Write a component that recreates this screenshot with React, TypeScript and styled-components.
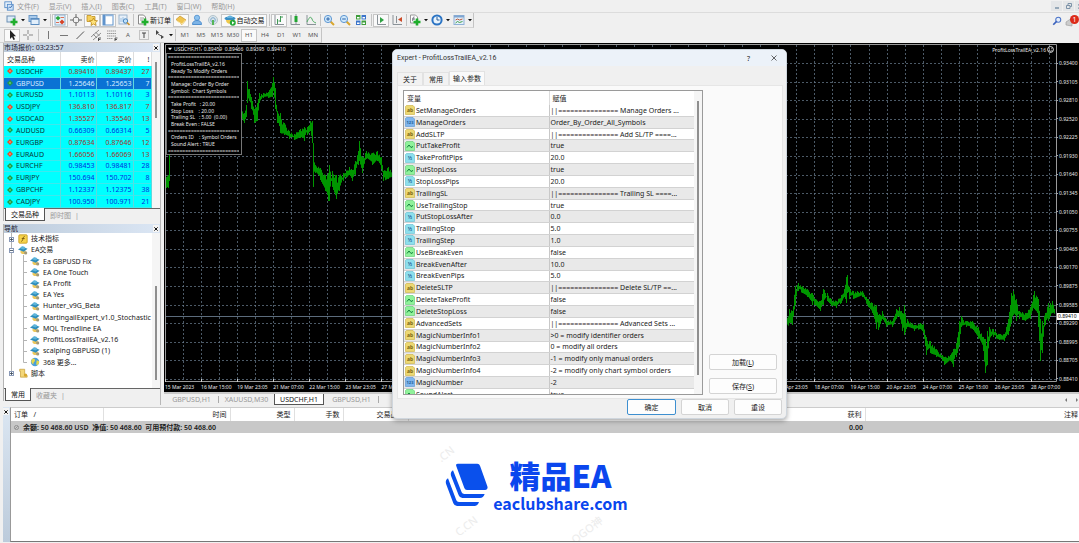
import React from "react";
import styled, { createGlobalStyle, css } from "styled-components";

const Global = createGlobalStyle`
  * { box-sizing: border-box; }
  body { margin: 0; background: #f0f0f0; }
  body, button, table, input {
    font-family: "Noto Sans", "Noto Sans CJK SC", sans-serif;
    font-size: 7px;
    line-height: 9px;
    color: #1a1a1a;
  }
  button { border: 0; padding: 0; background: none; }
  table { border-collapse: collapse; border-spacing: 0; }
  th, td { padding: 0; font-weight: 400; text-align: left; white-space: nowrap; }
  a { color: inherit; text-decoration: none; }
  svg { display: block; flex: none; }
`;

/* ---------- shell ---------- */

const App_ = styled.div`
  position: relative;
  display: flex;
  flex-direction: column;
  min-height: 100vh;
  overflow: hidden;
`;

const MenuBar = styled.nav`
  display: flex;
  align-items: center;
  gap: 3px;
  height: 13px;
  padding-left: 4px;
  border-bottom: 1px solid #dcdcdc;
`;

const MenuList = styled.div`
  display: flex;
  gap: 10px;
`;

const MenuItem = styled.button`
  color: #999;
  white-space: nowrap;
`;

const WindowButtons = styled.div`
  display: flex;
  gap: 1px;
  margin-left: auto;
  overflow: hidden;
  width: 28px;
`;

const WindowButton = styled.button`
  flex: none;
  display: grid;
  place-items: center;
  width: 11px;
  height: 10px;
  background: #e4e6e8;
`;

const ToolRow = styled.div`
  display: flex;
  justify-content: space-between;
  height: 15px;
`;

const ToolGroup = styled.div`
  display: flex;
  align-items: center;
  padding-left: 4px;
  border-right: 1px solid #c4c4c4;
  border-bottom: 1px solid #d4d4d4;
`;

const Tool = styled.button<{ $on?: boolean }>`
  display: flex;
  align-items: center;
  justify-content: center;
  width: 16px;
  height: 13px;
  color: #555;
  font-size: 6px;
  border: 1px solid transparent;
  ${(p) => p.$on && css`background: #fafafa; border-color: #c6c6c6;`}
`;

const WideTool = styled(Tool)<{ $w: number }>`
  width: ${(p) => p.$w}px;
  gap: 1px;
  font-size: 7px;
  color: #111;
  white-space: nowrap;
`;

const CaretBox = styled.button`
  display: grid;
  place-items: center;
  width: 6px;
  height: 13px;
`;

const Sep = styled.span<{ $w: number }>`
  display: flex;
  justify-content: center;
  width: ${(p) => p.$w}px;
  &::before { content: ""; width: 1px; height: 12px; background: #c4c4c4; }
`;

const ToolRight = styled.div`
  display: flex;
  align-items: center;
  margin-right: 0;
`;

const Alerts = styled.button`
  position: relative;
  width: 14px;
  height: 14px;
  overflow: hidden;
`;

const Badge = styled.span`
  position: absolute;
  right: 0;
  top: 1px;
  width: 9px;
  height: 9px;
  border-radius: 5px;
  background: #dc2a18;
  color: #fff;
  font-size: 7px;
  line-height: 9px;
  text-align: center;
`;

const Workspace = styled.main`
  display: flex;
  height: 362px;
`;

/* ---------- left panels ---------- */

const Side = styled.aside`
  display: flex;
  flex-direction: column;
  gap: 3px;
  width: 161px;
  margin-right: 3px;
  padding: 0 0 2px 3px;
  border-right: 1px solid #b8b8b8;
`;

const Panel = styled.section`
  display: flex;
  flex-direction: column;
  border-left: 1px solid #b4b4b4;
  background: #fff;
`;

const PanelTitle = styled.header`
  display: flex;
  align-items: center;
  justify-content: space-between;
  height: 9px;
  color: #223;
  background: linear-gradient(90deg, #bccbdb, #dbe6f4);
  padding-right: 1px;
`;

const CloseButton = styled.button`
  display: grid;
  place-items: center;
  width: 6px;
  height: 7px;
  background: #f4f4f4;
`;

const PanelBody = styled.div`
  display: flex;
  justify-content: space-between;
`;

const ScrollTrack = styled.div<{ $top: number }>`
  width: 8px;
  padding: ${(p) => p.$top}px 0 0 3px;
  background: #f5f5f5;
`;

const Thumb = styled.div<{ $h: number }>`
  width: 2px;
  height: ${(p) => p.$h}px;
  background: #8f8f8f;
`;

const QuoteTable = styled.table`
  width: 147px;
  height: 156px;
  table-layout: fixed;
  th, td { text-align: right; padding-right: 1px; }
  th:first-child, td:first-child { text-align: left; }
  th { height: 14px; border-right: 1px solid #ddd; }
  td { border-right: 1px solid #5fd8dc; border-bottom: 1px solid #3ee8ec; }
`;

const QuoteRow = styled.tr<{ $sel?: boolean; $down?: boolean }>`
  background: ${(p) => (p.$sel ? "#0a72d4" : "#00ffff")};
  color: ${(p) => (p.$sel ? "#d8ecff" : p.$down ? "#a2342c" : "#0030e0")};
  td:first-child { color: ${(p) => (p.$sel ? "#d8ecff" : "#083838")}; }
`;

const SymbolCell = styled.span`
  display: flex;
  align-items: center;
  gap: 3px;
  padding-left: 3px;
`;

const TabStrip = styled.div`
  display: flex;
  height: 13px;
  padding-left: 1px;
  background: #f0f0f0;
  border-top: 1px solid #666;
`;

const PanelTab = styled.button<{ $on?: boolean }>`
  padding: 0 5px;
  height: 12px;
  color: #999;
  ${(p) =>
    p.$on
      ? css`
          color: #111;
          background: #fff;
          border: 1px solid #555;
          border-top: 0;
          margin-top: -1px;
          height: 13px;
        `
      : css`
          &::after { content: "|"; margin-left: 4px; }
        `}
`;

const Tree = styled.ul`
  display: grid;
  grid-template-rows: repeat(13, minmax(0, 1fr));
  flex: 1;
  height: 155px;
  margin: 0;
  padding: 0 0 9px;
  list-style: none;
  overflow: hidden;
`;

const TreeRow = styled.li`
  display: flex;
  align-items: center;
  gap: 3px;
  white-space: nowrap;
`;

/* ---------- chart ---------- */

const ChartColumn = styled.div`
  flex: 1;
  min-width: 0;
  display: flex;
  flex-direction: column;
`;

const ChartWindow = styled.section`
  position: relative;
  display: grid;
  grid-template-columns: minmax(0, 1fr) 22px;
  grid-template-rows: 339px 10px;
  background: #000;
  color: #e8e8e8;
  font-size: 5px;
  line-height: 6px;
  overflow: hidden;
`;

const Plot = styled.svg`
  width: 100%;
  height: 339px;
`;

const PriceAxis = styled.div`
  position: relative;
  display: flex;
  flex-direction: column;
  justify-content: space-between;
  padding-top: 17px;
  margin-left: -1px;
`;

const Price = styled.span`
  display: flex;
  align-items: center;
  gap: 1px;
  height: 6px;
  &::before { content: ""; width: 2px; height: 1px; background: #aaa; }
`;

const CurrentPrice = styled.span`
  position: absolute;
  top: 270px;
  left: 1px;
  right: 0;
  height: 7px;
  padding-left: 1px;
  background: #fff;
  color: #000;
`;

const DateAxis = styled.div`
  grid-column: 1 / -1;
  display: grid;
  grid-template-columns: repeat(25, 1fr);
  margin-right: 12px;
  padding: 2px 0 0 1px;
  white-space: nowrap;
`;

const DateLabel = styled.span<{ $col: number }>`
  grid-column: ${(p) => p.$col};
  grid-row: 1;
  width: 0;
`;

const ChartCaption = styled.div`
  position: absolute;
  left: 4px;
  top: 3px;
  display: flex;
  align-items: center;
  gap: 2px;
  white-space: pre;
`;

const ExpertBadge = styled.div`
  position: absolute;
  right: 25px;
  top: 3px;
  display: flex;
  align-items: center;
  gap: 1px;
`;

const InfoBox = styled.div`
  position: absolute;
  left: 2px;
  top: 10px;
  width: 76px;
  height: 102px;
  display: grid;
  grid-template-rows: repeat(15, 1fr);
  align-items: center;
  padding: 0 2px 0 4px;
  background: #000;
  border: 1px solid #777;
  white-space: pre;
`;

const Rule = styled.span`
  margin-left: -3px;
  overflow: hidden;
  color: #c8c8c8;
  font-weight: 700;
`;

const ChartTabs = styled.div`
  display: flex;
  align-items: stretch;
  height: 13px;
  border-top: 2px solid #c8c8c8;
`;

const ChartTab = styled.button<{ $on?: boolean; $bar?: boolean }>`
  width: ${(p) => (p.$on ? 50 : 55)}px;
  color: ${(p) => (p.$on ? "#222" : "#999")};
  ${(p) => p.$on && css`background: #fff; border: 1px solid #555; border-top: 0;`}
  ${(p) => p.$bar && css`background: linear-gradient(#aaa, #aaa) right center / 1px 7px no-repeat;`}
`;

const TabArrows = styled.div`
  display: flex;
  align-items: center;
  gap: 7px;
  margin-left: auto;
`;

/* ---------- terminal ---------- */

const Terminal = styled.section`
  flex: 1;
  display: flex;
  padding: 2px 0 1px 3px;
`;

const Grip = styled.div`
  width: 7px;
  background: linear-gradient(#dbe6f2, #bccbdb);
  padding-top: 1px;
`;

const TerminalBody = styled.div`
  flex: 1;
  display: flex;
  flex-direction: column;
  background: #fff;
  border-left: 1px solid #999;
  border-top: 1px solid #ccc;
  border-bottom: 1px solid #777;
`;

const Orders = styled.table`
  width: 100%;
  table-layout: fixed;
  th { height: 13px; text-align: right; padding-right: 3px; border-right: 1px solid #e0e0e0; overflow: hidden; }
  th:first-child { text-align: left; padding-left: 3px; }
  th:last-child { padding-right: 1px; border-right: 0; }
  td { height: 12px; background: #c8c8c8; font-weight: 600; }
`;

const AmountCell = styled.td`
  && { text-align: right; padding-right: 2px; }
`;

const Balance = styled.span`
  display: flex;
  align-items: center;
  gap: 4px;
  padding-left: 3px;
  white-space: pre;
`;

const Brand = styled.div`
  position: relative;
  flex: 1;
  display: flex;
  align-items: center;
  justify-content: center;
  gap: 5px;
  padding: 0 17px 3px 0;
  overflow: hidden;
`;

const BrandText = styled.div`
  display: flex;
  flex-direction: column;
  align-items: center;
  color: #0a46ee;
  font-family: "Noto Sans CJK SC", sans-serif;
  font-weight: 700;
`;

const BrandName = styled.strong`
  font-size: 31px;
  line-height: 34px;
`;

const BrandUrl = styled.a`
  && { color: #0a46ee; }
  font-size: 16px;
  line-height: 22px;
`;

const Watermark = styled.span<{ $x: number; $y: number }>`
  position: absolute;
  left: ${(p) => p.$x}px;
  top: ${(p) => p.$y}px;
  font-size: 11px;
  line-height: 14px;
  color: #ececec;
  transform: rotate(-38deg);
`;

/* ---------- dialog ---------- */

const Dialog = styled.div`
  position: absolute;
  left: 392px;
  top: 49px;
  width: 395px;
  height: 370px;
  display: flex;
  flex-direction: column;
  background: #f0f0f0;
  border: 1px solid #cfd6dd;
  border-radius: 5px;
  box-shadow: 0 2px 5px rgba(0, 0, 0, 0.35);
  overflow: hidden;
`;

const DialogTitle = styled.header`
  display: flex;
  align-items: center;
  height: 16px;
  padding: 0 8px 0 4px;
  background: #ecf2f9;
`;

const DialogTitleText = styled.span`
  flex: 1;
  color: #333;
  font-family: Roboto, sans-serif;
`;

const TitleButton = styled.button`
  display: grid;
  place-items: center;
  width: 9px;
  height: 12px;
  margin-left: 16px;
`;

const DialogTabs = styled.div`
  display: flex;
  align-items: flex-end;
  height: 19px;
  padding-left: 4px;
`;

const DialogTab = styled.button<{ $on?: boolean }>`
  width: ${(p) => (p.$on ? 36 : 26)}px;
  height: ${(p) => (p.$on ? 14 : 13)}px;
  background: ${(p) => (p.$on ? "#fafafa" : "#f2f2f2")};
  border: 1px solid #e2e2e2;
  border-bottom: 0;
`;

const DialogPage = styled.div`
  display: flex;
  gap: 6px;
  height: 314px;
  margin: 0 3px 0 4px;
  padding: 4px 5px 4px 5px;
  background: #fafafa;
  border: 1px solid #e6e6e6;
`;

const ParamFrame = styled.div`
  display: flex;
  width: 302px;
  height: 305px;
  background: #fff;
  border: 1px solid #9a9a9a;
  overflow: hidden;
`;

const ParamTable = styled.table`
  flex: 1;
  width: 290px;
  height: 310px;
  table-layout: fixed;
  th { height: 14px; padding-left: 3px; }
  th + th, td + td { border-left: 1px solid #c8c8c8; }
  td + td { padding-left: 1px; overflow: hidden; text-overflow: ellipsis; }
  th + th { border-color: #ddd; }
`;

const ParamRow = styled.tr<{ $alt: boolean }>`
  background: ${(p) => (p.$alt ? "#e9e9e9" : "#fff")};
  td { border-bottom: 1px solid #d2d2d2; }
`;

const ParamName = styled.span`
  display: flex;
  align-items: center;
  gap: 1px;
  padding-left: 1px;
`;

const SideButtons = styled.div`
  display: flex;
  flex: 1;
  flex-direction: column;
  justify-content: flex-end;
  gap: 8px;
`;

const PushButton = styled.button<{ $main?: boolean; $w: number }>`
  width: ${(p) => p.$w}px;
  height: 16px;
  background: #fdfdfd;
  border: 1px solid ${(p) => (p.$main ? "#3d8fd0" : "#d4d4d4")};
  border-radius: 2px;
`;

const DialogActions = styled.footer`
  display: flex;
  justify-content: flex-end;
  gap: 5px;
  padding-right: 4px;
`;

/* ---------- icons ---------- */

const Ico = ({ s = 12, children }: { s?: number; children: React.ReactNode }) => (
  <svg width={s} height={s} viewBox="0 0 12 12" fill="none" aria-hidden="true">
    {children}
  </svg>
);

const Cross = ({ s = 5, c = "#111", w = 3 }: { s?: number; c?: string; w?: number }) => (
  <Ico s={s}>
    <path d="M1 1L11 11M11 1L1 11" stroke={c} strokeWidth={w} />
  </Ico>
);

const Caret = () => (
  <CaretBox aria-label="更多选项">
    <Ico s={4}>
      <path d="M0 3h12l-6 7z" fill="#111" />
    </Ico>
  </CaretBox>
);

const plus = <path d="M8 4.500v7M4.500 8h7" stroke="#1fae2c" strokeWidth="2.6" />;

const icons: Record<string, React.ReactNode> = {
  logo: (
    <>
      <rect x="1" y="1" width="8" height="7" fill="#e8f2fc" stroke="#4e86c6" />
      <rect x="4" y="4" width="7" height="7" fill="#cfe3f8" stroke="#4e86c6" />
      <path d="M5 9l2-2 1 1 2-3" stroke="#2a62a8" />
    </>
  ),
  newChart: (
    <>
      <rect x="1" y="2" width="8" height="6" fill="#dcebf8" stroke="#6d8fb3" />
      {plus}
    </>
  ),
  profiles: (
    <>
      <rect x="1" y="1.5" width="8" height="6" fill="#a9cbec" stroke="#6a97c5" />
      <rect x="3" y="4.5" width="8" height="6" fill="#e2effb" stroke="#5a8cc0" />
      <path d="M3 5h8" stroke="#5a8cc0" strokeWidth="1.5" />
    </>
  ),
  marketWatch: (
    <>
      <rect x="1" y="1" width="10" height="10" fill="#e6f1fa" stroke="#8fb0cc" />
      <path d="M4 2l2.500 2L4 6.500 1.500 4z" fill="#2aa83a" />
      <path d="M8 5.500l2.500 2.500L8 10.500 5.500 8z" fill="#d64326" />
      <path d="M6.500 3.500h3.500M2 8.500h3" stroke="#de6f55" />
    </>
  ),
  crosshair: (
    <>
      <circle cx="6" cy="6" r="3" stroke="#888" />
      <path d="M6 0v4M6 8v4M0 6h4M8 6h4" stroke="#666" />
    </>
  ),
  favorites: (
    <>
      <path d="M1 1.500h4l1 1h3v5H1z" fill="#f4cf5b" stroke="#c09020" strokeWidth=".8" />
      <path d="M7.500 4l1.200 2.500 2.800.3-2 1.900.6 2.800-2.600-1.500-2.500 1.500.5-2.800-2-1.900 2.800-.3z" fill="#ffe27a" stroke="#b98714" strokeWidth=".8" />
    </>
  ),
  navigator: (
    <>
      <rect x="1" y="1" width="10" height="10" fill="#fff" stroke="#5f93cc" />
      <path d="M1 1h2.500v10H1z" fill="#5f93cc" />
      <path d="M3 1.500h8" stroke="#8fb5de" strokeWidth="1.500" />
    </>
  ),
  tester: (
    <>
      <rect x="1" y="1" width="8" height="9" fill="#e7f0f9" stroke="#9ab4cd" />
      <path d="M3 8V4M5 8V3M7 8V5" stroke="#9cc0e2" />
      <circle cx="7.500" cy="7" r="2.200" fill="#bfe0fa" stroke="#4b86bf" />
      <path d="M9 8.500l2.500 2.500" stroke="#c8922c" strokeWidth="1.600" />
    </>
  ),
  newOrder: (
    <>
      <path d="M1.500 1h5l2 2v7h-7z" fill="#fff" stroke="#888" />
      <path d="M3 4h4M3 6h3" stroke="#888" strokeWidth=".8" />
      {plus}
    </>
  ),
  metaEditor: (
    <>
      <path d="M1 5.500l4-3.500 6 4-4 4.500z" fill="#efc34e" stroke="#cf9c34" strokeWidth=".8" />
      <path d="M2 7l5 3 3.500-4" stroke="#fbe7a6" />
    </>
  ),
  account: (
    <>
      <circle cx="6" cy="3.800" r="2.600" fill="#8cc2ef" stroke="#5f9ad4" />
      <path d="M1.500 10.500c0-3 2-4 4.500-4s4.500 1 4.500 4z" fill="#7db3e6" stroke="#4f8fcf" />
    </>
  ),
  signal: (
    <>
      <circle cx="6" cy="6" r="4.500" fill="#dbe6ec" stroke="#b4c4cd" />
      <circle cx="6" cy="6" r="2.300" stroke="#7fa9cc" />
      <path d="M6 6v5" stroke="#57b657" strokeWidth="2" />
    </>
  ),
  autoTrade: (
    <>
      <ellipse cx="6" cy="4.500" rx="5.500" ry="2" fill="#3a8ec4" />
      <path d="M3 4c0-3.500 6-3.500 6 0z" fill="#66b3dd" />
      <path d="M2 6h7c0 5-7 5-7 0z" fill="#efc94c" />
      <circle cx="8.800" cy="8.800" r="3" fill="#25a838" />
      <path d="M8 7.200l2.500 1.600L8 10.400z" fill="#fff" />
    </>
  ),
  bars: (
    <>
      <path d="M2 1v9.500h9" stroke="#8a9298" />
      <path d="M4.500 5v5M7.500 2v6M7.500 3h2.500M5.500 7h2" stroke="#3f9a55" />
    </>
  ),
  candles: (
    <>
      <path d="M2 1v9.500h9M7 0v10" stroke="#8a9298" />
      <rect x="5.500" y="2" width="3" height="6" fill="#21a532" />
    </>
  ),
  line: (
    <>
      <path d="M2 1v9.500h9" stroke="#8a9298" />
      <path d="M2 8c2-5 4-6 5-3s2 3 4 4" stroke="#52ad66" />
    </>
  ),
  zoomIn: (
    <>
      <path d="M7.500 7.500l3.500 3.500" stroke="#d9a62e" strokeWidth="2" />
      <circle cx="5" cy="5" r="3.600" fill="#cfe8fb" stroke="#5f97d2" />
      <path d="M5 3.200v3.600M3.200 5h3.600" stroke="#2a62a8" />
    </>
  ),
  zoomOut: (
    <>
      <path d="M7.500 7.500l3.500 3.500" stroke="#d9a62e" strokeWidth="2" />
      <circle cx="5" cy="5" r="3.600" fill="#cfe8fb" stroke="#5f97d2" />
      <path d="M3.200 5h3.600" stroke="#2a62a8" />
    </>
  ),
  tile: (
    <>
      <rect x="1" y="1" width="10" height="10" fill="#fff" />
      <path d="M1 1h4.500v4.500H1zM6.500 6.500H11V11H6.500z" fill="#3f9d3c" />
      <path d="M6.500 1H11v4.500H6.500zM1 6.500h4.500V11H1z" fill="#3b74c9" />
      <path d="M2 3h2.500v1.500H2zM7.500 3H10v1.500H7.500zM2 8.500h2.500V10H2zM7.500 8.500H10V10H7.500z" fill="#fff" />
    </>
  ),
  scroll: (
    <>
      <path d="M2.500 1v9.500h8.500" stroke="#8a9298" />
      <path d="M5 3l4 3-4 3z" fill="#2fa243" />
    </>
  ),
  shift: (
    <>
      <path d="M2 1v9.500h9M5.500 2v7" stroke="#8a9298" />
      <path d="M11 3L7 5.500 11 8z" fill="#cc4b28" />
    </>
  ),
  indicator: (
    <>
      <path d="M1.500 1h5l2 2v6h-7z" fill="#fff" stroke="#999" />
      <path d="M5.500 3c-2-1-1 4-2.500 4M3 5h3" stroke="#667" />
      {plus}
    </>
  ),
  clock: (
    <>
      <circle cx="6" cy="6" r="4.600" fill="#e9f4fd" stroke="#2b74c4" strokeWidth="2" />
      <path d="M6 3v3h2.500" stroke="#2b5c94" />
    </>
  ),
  template: (
    <>
      <rect x="1" y="1.500" width="10" height="9" fill="#e4effa" stroke="#8db0d6" />
      <path d="M1 2.500h10" stroke="#7fa5d0" strokeWidth="2" />
      <path d="M2.500 6l2-1 2 1 3-1" stroke="#b85a3c" />
      <path d="M2.500 9l2-1.500 2 1 3-1" stroke="#42a04c" />
    </>
  ),
  cursor: <path d="M4 1v9l2-2 1.500 3 1.500-.8L7.500 7.300H10z" fill="#222" />,
  plusThin: <path d="M6 1v4M6 7v4M1 6h4M7 6h4" stroke="#888" />,
  vline: <path d="M6.500 2v8" stroke="#777" />,
  hline: <path d="M2 6.500h8" stroke="#777" />,
  trend: <path d="M2.500 10L10 2.500" stroke="#555" />,
  channel: (
    <>
      <path d="M1 8l8-7M3 11l8-7M3 5l4 4M5.500 3l4 4" stroke="#777" strokeWidth=".8" />
      <path d="M8.500 12V9H11M8.500 10.500h2" stroke="#333" strokeWidth=".8" />
    </>
  ),
  fibo: (
    <>
      <path d="M1 2h9M1 4.500h9M1 7h9M1 9.500h6" stroke="#999" strokeDasharray="1.500 .5" />
      <path d="M9 12V9h2.500M9 10.500h2" stroke="#333" strokeWidth=".8" />
    </>
  ),
  label: (
    <>
      <rect x="1.500" y="1.500" width="9" height="9" stroke="#999" strokeDasharray="1 1" />
      <path d="M4 4h4M6 4v5" stroke="#444" />
    </>
  ),
  arrows: (
    <>
      <path d="M2 1l3 2.500-3 2.500zM7 6l3 2-3 2z" fill="#444" />
      <path d="M4 5l4 2.500" stroke="#555" />
    </>
  ),
  search: (
    <>
      <circle cx="7.500" cy="4.500" r="3" fill="#e4eefb" stroke="#4a73c8" strokeWidth="1.300" />
      <path d="M5.500 6.500l-4 4" stroke="#3b62bd" strokeWidth="2" />
    </>
  ),
  expert: (
    <>
      <path d="M3 7h6v2.500c-1.500 2-4.500 2-6-.5z" fill="#ecc75a" />
      <path d="M0 5.500L5 2l6.500 2.500L7 8z" fill="#2f8dbb" />
      <path d="M2.500 4C4 .5 8 1 9 4L6.500 5.500z" fill="#5db4da" />
      <circle cx="9.200" cy="9.500" r="1.900" fill="#a39a78" />
    </>
  ),
  indicators: (
    <>
      <rect x="1" y="1" width="10" height="10" rx="1" fill="#f6d34c" stroke="#c79a1c" />
      <path d="M8 3C5.500 2.500 6.500 8 4 9M4.500 5.500H8" stroke="#6d4e08" />
    </>
  ),
  globe: (
    <>
      <circle cx="6" cy="6" r="5" fill="#4aa0d8" />
      <path d="M2 3c2-2 4-1 4 1s-2 2-2 4-2-1-2.500-2zM8 4l3 1c0 3-1 4-3 5-1-2 0-3 0-6z" fill="#e6d84a" />
    </>
  ),
  script: (
    <>
      <path d="M2 1.500h6v7.500h3v2H3V4H2z" fill="#f3d77a" stroke="#c39a30" strokeWidth=".8" />
      <circle cx="9" cy="8.500" r="2" fill="#d8a72c" />
    </>
  ),
};

const Icon = ({ n, s }: { n: string; s?: number }) => <Ico s={s}>{icons[n]}</Ico>;

const tint: Record<string, [string, string, string]> = {
  ab: ["#ecd873", "#c9ae3c", "ab"],
  en: ["#7fb6ee", "#5590cf", "123"],
  bo: ["#8ff29a", "#5cc96e", ""],
  du: ["#8ddfec", "#5fbccf", "½"],
};

const ParamIcon = ({ k }: { k: string }) => {
  const [bg, edge, t] = tint[k];
  return (
    <svg width="10" height="10" viewBox="0 0 10 10" aria-hidden="true">
      <path d="M1.500 .5H8l1.500 1.500v7.500H.5v-8z" fill={bg} stroke={edge} strokeWidth=".6" />
      {t ? (
        <text x="5" y="7" fontSize={t.length > 2 ? 4 : 5} fontWeight="700" textAnchor="middle" fill={k === "ab" ? "#7a6410" : "#1e5b94"}>
          {t}
        </text>
      ) : (
        <path d="M2 6.500l2-2.500 2 2.500 2-1" fill="none" stroke="#11803a" />
      )}
    </svg>
  );
};

/* ---------- data ---------- */

const menus = ["文件(F)", "显示(V)", "插入(I)", "图表(C)", "工具(T)", "窗口(W)", "帮助(H)"];

const quotes: [string, string, string, string, boolean][] = [
  ["USDCHF", "0.89410", "0.89437", "27", true],
  ["GBPUSD", "1.25646", "1.25653", "7", false],
  ["EURUSD", "1.10113", "1.10116", "3", false],
  ["USDJPY", "136.810", "136.817", "7", true],
  ["USDCAD", "1.35527", "1.35540", "13", true],
  ["AUDUSD", "0.66309", "0.66314", "5", false],
  ["EURGBP", "0.87634", "0.87646", "12", true],
  ["EURAUD", "1.66056", "1.66069", "13", true],
  ["EURCHF", "0.98453", "0.98481", "28", false],
  ["EURJPY", "150.694", "150.702", "8", false],
  ["GBPCHF", "1.12337", "1.12375", "38", false],
  ["CADJPY", "100.950", "100.971", "21", false],
];

const experts = [
  "Ea GBPUSD Fix",
  "EA One Touch",
  "EA Profit",
  "EA Yes",
  "Hunter_v9G_Beta",
  "MartingailExpert_v1.0_Stochastic",
  "MQL Trendline EA",
  "ProfitLossTrailEA_v2.16",
  "scalping GBPUSD (1)",
];

const params: [string, string, string][] = [
  ["ab", "SetManageOrders", "||=============== Manage Orders ..."],
  ["en", "ManageOrders", "Order_By_Order_All_Symbols"],
  ["ab", "AddSLTP", "||=============== Add SL/TP ====..."],
  ["bo", "PutTakeProfit", "true"],
  ["du", "TakeProfitPips", "20.0"],
  ["bo", "PutStopLoss", "true"],
  ["du", "StopLossPips", "20.0"],
  ["ab", "TrailingSL", "||=============== Trailing SL ====..."],
  ["bo", "UseTrailingStop", "true"],
  ["du", "PutStopLossAfter", "0.0"],
  ["du", "TrailingStop", "5.0"],
  ["du", "TrailingStep", "1.0"],
  ["bo", "UseBreakEven", "false"],
  ["du", "BreakEvenAfter", "10.0"],
  ["du", "BreakEvenPips", "5.0"],
  ["ab", "DeleteSLTP", "||=============== Delete SL/TP ==..."],
  ["bo", "DeleteTakeProfit", "false"],
  ["bo", "DeleteStopLoss", "false"],
  ["ab", "AdvancedSets", "||=============== Advanced Sets ..."],
  ["ab", "MagicNumberInfo1", ">0 = modify identifier orders"],
  ["ab", "MagicNumberInfo2", "0 = modify all orders"],
  ["ab", "MagicNumberInfo3", "-1 = modify only manual orders"],
  ["ab", "MagicNumberInfo4", "-2 = modify only chart symbol orders"],
  ["en", "MagicNumber", "-2"],
  ["bo", "SoundAlert", "true"],
];

const prices = [
  "0.93400", "0.93105", "0.92810", "0.92520", "0.92225", "0.91930", "0.91640", "0.91345", "0.91050",
  "0.90755", "0.90465", "0.90170", "0.89875", "0.89585", "0.89290", "0.88995", "0.88705", "0.88410",
];

const dates: [number, string][] = [
  [1, "15 Mar 2023"], [2, "16 Mar 15:00"], [3, "19 Mar 23:05"], [4, "21 Mar 07:00"],
  [5, "22 Mar 15:00"], [6, "23 Mar 23:05"], [7, "27 Mar 07:00"],
  [18, "17 Apr 23:05"], [19, "18 Apr 07:00"], [20, "19 Apr 15:00"], [21, "20 Apr 23:05"],
  [22, "24 Apr 07:00"], [23, "25 Apr 15:00"], [24, "26 Apr 23:05"], [25, "28 Apr 07:00"],
];

const info = [
  "=", "ProfitLossTrailEA_v2.16", "Ready To Modify Orders", "=", "Manage: Order By Order",
  "Symbol:  Chart Symbols", "=", "Take Profit   : 20.00", "Stop Loss    : 20.00",
  "Trailing SL   : 5.00  (0.00)", "Break Even : FALSE", "=", "Orders ID    : Symbol Orders",
  "Sound Alert : TRUE", "=",
];

/* Price range of the bars: plot x, high, low. */
const segments: [number, number, number][][] = [
  [[2, 134, 145], [4, 132, 145], [5, 112, 138], [6, 100, 120]],
  [
    [77, 66, 74], [80, 70, 80], [82, 62, 74], [83, 38, 60], [85, 46, 58], [87, 54, 66], [90, 66, 80],
    [93, 60, 78], [95, 50, 60], [99, 50, 55], [104, 49, 55], [108, 40, 54], [109, 34, 48], [111, 45, 66],
    [113, 68, 80], [116, 70, 90], [120, 80, 92], [125, 88, 96], [130, 91, 97], [136, 86, 95], [140, 84, 98],
    [143, 84, 92], [146, 78, 88], [148, 78, 100], [149, 100, 144], [151, 122, 130], [156, 125, 137],
    [161, 132, 148], [164, 130, 158], [165, 122, 158], [168, 128, 144], [172, 132, 156], [175, 132, 148],
    [179, 130, 138], [185, 124, 132], [188, 127, 138], [191, 118, 132], [194, 108, 122], [195, 98, 118],
    [198, 114, 130], [202, 108, 116], [208, 110, 122], [213, 108, 118], [217, 114, 126], [219, 128, 138],
    [224, 124, 136], [228, 128, 136],
  ],
  [
    [622, 276, 288], [625, 266, 280], [628, 268, 282], [631, 243, 262], [634, 240, 248], [638, 243, 250],
    [643, 246, 254], [648, 250, 262], [651, 256, 262], [656, 258, 268], [659, 246, 262], [663, 250, 258],
    [667, 256, 263], [672, 258, 265], [677, 252, 260], [680, 246, 254], [682, 234, 260], [683, 232, 250],
    [685, 244, 256], [689, 248, 256], [698, 248, 254], [704, 256, 264], [708, 260, 270], [712, 262, 286],
    [714, 272, 287], [718, 268, 276], [722, 276, 284], [728, 278, 284], [732, 266, 276], [735, 264, 274],
    [738, 270, 288], [740, 262, 292], [743, 276, 284], [750, 282, 288], [756, 280, 286], [759, 281, 290],
    [762, 294, 312], [766, 298, 310], [772, 306, 314], [778, 312, 318], [780, 314, 322], [786, 312, 318],
    [789, 306, 324], [792, 300, 314], [795, 278, 302], [797, 273, 284], [802, 278, 284], [808, 278, 286],
    [814, 284, 296], [819, 294, 308], [821, 296, 330], [823, 288, 322], [825, 284, 298], [829, 286, 294],
    [835, 291, 297], [840, 291, 298], [844, 276, 292], [847, 250, 280], [849, 248, 272], [852, 256, 278],
    [855, 268, 276], [861, 270, 278], [866, 264, 276], [870, 248, 266], [873, 254, 270], [874, 256, 284],
    [876, 276, 318], [878, 278, 310], [881, 270, 282], [884, 260, 278], [888, 258, 270], [891, 266, 274],
  ],
];

const buildBars = () => {
  let d = "";
  segments.forEach((seg) => {
    for (let i = 0; i < seg.length - 1; i++) {
      const [x0, h0, l0] = seg[i];
      const [x1, h1, l1] = seg[i + 1];
      for (let x = x0; x < x1; x++) {
        const t = (x - x0) / (x1 - x0);
        const w = x === x0 ? 0 : (l0 - h0) * 0.35;
        const a = ((x * 37) % 11) / 11;
        const b = ((x * 53) % 13) / 13;
        const hi = h0 + (h1 - h0) * t + a * w;
        const lo = l0 + (l1 - l0) * t - b * w;
        d += `M${x + 0.5} ${hi.toFixed(1)}V${lo.toFixed(1)}`;
      }
    }
  });
  return d;
};

const barPath = buildBars();
const gridX = Array.from({ length: 49 }, (_, i) => Math.round(19 + i * 18.04) + 0.5);
const gridY = Array.from({ length: 18 }, (_, i) => Math.round(20 + i * 18.59) + 0.5);
const tickX = Array.from({ length: 25 }, (_, i) => Math.round(1 + i * 36.08) + 0.5);

/* ---------- parts ---------- */

const TreeGuide = ({ kind }: { kind: "closed" | "open" | "child" | "last" | "end" }) => {
  const child = kind === "child" || kind === "last";
  return (
    <svg width={child ? 23 : 11} height="12" viewBox={`0 0 ${child ? 23 : 11} 12`} fill="none" stroke="#b4b4b4" aria-hidden="true">
      <path d={kind === "end" ? "M7.500 0V6" : "M7.500 0V12"} />
      {child ? (
        <path d={kind === "last" ? "M19.500 0V6.500H23" : "M19.500 0V12M19.500 6.500H23"} />
      ) : (
        <>
          <rect x="5.500" y="4.500" width="4" height="4" fill="#fff" stroke="#8a9ab8" />
          <path d={kind === "open" ? "M6 6.500h3" : "M6 6.500h3M7.500 5v3"} stroke="#345" strokeWidth=".8" />
        </>
      )}
    </svg>
  );
};

const T = ({ n, label, on }: { n: string; label: string; on?: boolean }) => (
  <Tool aria-label={label} $on={on}>
    <Icon n={n} />
  </Tool>
);

const Toolbars = () => (
  <>
    <ToolRow>
      <ToolGroup>
        <T n="newChart" label="新图表" />
        <Caret />
        <T n="profiles" label="配置文件" />
        <Caret />
        <Sep $w={4} />
        <T n="marketWatch" label="市场报价" on />
        <T n="crosshair" label="数据窗口" />
        <T n="favorites" label="导航" on />
        <T n="navigator" label="终端" on />
        <T n="tester" label="策略测试" />
        <Sep $w={3} />
        <WideTool $w={38}>
          <Icon n="newOrder" />
          新订单
        </WideTool>
        <T n="metaEditor" label="编辑器" on />
        <T n="account" label="账户" />
        <T n="signal" label="信号" />
        <WideTool $w={46} $on>
          <Icon n="autoTrade" />
          自动交易
        </WideTool>
        <Sep $w={4} />
        <T n="bars" label="柱状图" on />
        <T n="candles" label="蜡烛图" />
        <T n="line" label="折线图" />
        <Sep $w={2} />
        <T n="zoomIn" label="放大" />
        <T n="zoomOut" label="缩小" />
        <T n="tile" label="平铺" />
        <Sep $w={4} />
        <T n="scroll" label="自动滚动" on />
        <T n="shift" label="图表平移" />
        <Sep $w={2} />
        <T n="indicator" label="指标" />
        <Caret />
        <T n="clock" label="周期" />
        <Caret />
        <T n="template" label="模板" />
        <Caret />
      </ToolGroup>
      <ToolRight>
        <Tool aria-label="搜索">
          <Icon n="search" s={10} />
        </Tool>
        <Alerts aria-label="通知">
          <svg width="14" height="14" viewBox="0 0 14 14" aria-hidden="true">
            <path d="M1 8l6-4v8l-6-1z" fill="#ccc" stroke="#999" strokeWidth=".6" />
          </svg>
          <Badge>1</Badge>
        </Alerts>
      </ToolRight>
    </ToolRow>
    <ToolRow>
      <ToolGroup>
        <T n="cursor" label="光标" on />
        <T n="plusThin" label="十字线" />
        <Sep $w={4} />
        <T n="vline" label="垂直线" />
        <T n="hline" label="水平线" />
        <T n="trend" label="趋势线" />
        <T n="channel" label="通道" />
        <T n="fibo" label="斐波那契" />
        <Tool>A</Tool>
        <T n="label" label="文本标签" />
        <T n="arrows" label="箭头" />
        <Caret />
        <Sep $w={3} />
        {["M1", "M5", "M15", "M30", "H1", "H4", "D1", "W1", "MN"].map((p) => (
          <Tool key={p} $on={p === "H1"}>
            {p}
          </Tool>
        ))}
      </ToolGroup>
    </ToolRow>
  </>
);

const MarketWatch = () => (
  <Panel>
    <PanelTitle>
      市场报价: 03:23:57
      <CloseButton aria-label="关闭">
        <Cross s={4} />
      </CloseButton>
    </PanelTitle>
    <PanelBody>
      <QuoteTable>
        <colgroup>
          <col width="56" />
          <col width="36" />
          <col width="37" />
          <col width="18" />
        </colgroup>
        <thead>
          <tr>
            <th>
              <SymbolCell>交易品种</SymbolCell>
            </th>
            <th>卖价</th>
            <th>买价</th>
            <th>!</th>
          </tr>
        </thead>
        <tbody>
          {quotes.map(([s, b, a, d, down], i) => (
            <QuoteRow key={s} $sel={i === 1} $down={down}>
              <td>
                <SymbolCell>
                  <Ico s={6}>
                    <path d="M6 0l6 6-6 6-6-6z" fill={down ? "#e2502c" : "#1f9a44"} />
                    <path d="M6 4l2 2-2 2-2-2z" fill={down ? "#ffb090" : "#8ae09a"} />
                  </Ico>
                  {s}
                </SymbolCell>
              </td>
              <td>{b}</td>
              <td>{a}</td>
              <td>{d}</td>
            </QuoteRow>
          ))}
        </tbody>
      </QuoteTable>
      <ScrollTrack $top={10}>
        <Thumb $h={56} />
      </ScrollTrack>
    </PanelBody>
    <TabStrip>
      <PanelTab $on>交易品种</PanelTab>
      <PanelTab>即时图</PanelTab>
    </TabStrip>
  </Panel>
);

const Navigator = () => (
  <Panel>
    <PanelTitle>
      导航
      <CloseButton aria-label="关闭">
        <Cross s={4} />
      </CloseButton>
    </PanelTitle>
    <PanelBody>
      <Tree>
        <TreeRow>
          <TreeGuide kind="closed" />
          <Icon n="indicators" s={10} />
          技术指标
        </TreeRow>
        <TreeRow>
          <TreeGuide kind="open" />
          <Icon n="expert" s={10} />
          EA交易
        </TreeRow>
        {experts.map((e) => (
          <TreeRow key={e}>
            <TreeGuide kind="child" />
            <Icon n="expert" s={10} />
            {e}
          </TreeRow>
        ))}
        <TreeRow>
          <TreeGuide kind="last" />
          <Icon n="globe" s={10} />
          368 更多...
        </TreeRow>
        <TreeRow>
          <TreeGuide kind="end" />
          <Icon n="script" s={10} />
          脚本
        </TreeRow>
      </Tree>
      <ScrollTrack $top={53}>
        <Thumb $h={94} />
      </ScrollTrack>
    </PanelBody>
    <TabStrip>
      <PanelTab $on>常用</PanelTab>
      <PanelTab>收藏夹</PanelTab>
    </TabStrip>
  </Panel>
);

const Chart = () => (
  <ChartColumn>
    <ChartWindow>
      <Plot viewBox="0 0 893 339" preserveAspectRatio="none" fill="none" aria-label="USDCHF H1">
        <path
          d={gridX.map((x) => `M${x} 2V338`).join("") + gridY.map((y) => `M2 ${y}H892`).join("")}
          stroke="#66788a"
          strokeDasharray="2 2"
          strokeWidth="1"
          opacity=".75"
        />
        <path d="M2 273.500H892" stroke="#5c6c7c" />
        <path d={barPath} stroke="#009600" />
        <path d="M1.500 338.500V1.500H892.500V338.500H1.500" stroke="#9a9a9a" />
        <path d={tickX.map((x) => `M${x} 336V339`).join("")} stroke="#ccc" />
      </Plot>
      <PriceAxis>
        {prices.map((p) => (
          <Price key={p}>{p}</Price>
        ))}
        <CurrentPrice>0.89410</CurrentPrice>
      </PriceAxis>
      <DateAxis>
        {dates.map(([c, d]) => (
          <DateLabel key={d} $col={c}>
            {d}
          </DateLabel>
        ))}
      </DateAxis>
      <ChartCaption>
        <Ico s={4}>
          <path d="M0 2h12l-6 8z" fill="#fff" />
        </Ico>
        {"USDCHF,H1  0.89459  0.89466  0.89395  0.89410"}
      </ChartCaption>
      <ExpertBadge>
        ProfitLossTrailEA_v2.16
        <Ico s={7}>
          <circle cx="6" cy="6" r="5" stroke="#fff" strokeWidth="1.500" />
          <path d="M4 4v1.500M8 4v1.500M3.500 7.500c1 2 4 2 5 0" stroke="#fff" strokeWidth="1.400" />
        </Ico>
      </ExpertBadge>
      <InfoBox>
        {info.map((l, i) => (l === "=" ? <Rule key={i}>{"=".repeat(25)}</Rule> : <span key={i}>{l}</span>))}
      </InfoBox>
    </ChartWindow>
    <ChartTabs>
      <ChartTab $bar>GBPUSD,H1</ChartTab>
      <ChartTab>XAUUSD,M30</ChartTab>
      <ChartTab $on>USDCHF,H1</ChartTab>
      <ChartTab $bar>GBPUSD,H1</ChartTab>
      <TabArrows>
        <Ico s={4}>
          <path d="M9 0v12L3 6z" fill="#777" />
        </Ico>
        <Ico s={4}>
          <path d="M3 0v12l6-6z" fill="#777" />
        </Ico>
      </TabArrows>
    </ChartTabs>
  </ChartColumn>
);

const TerminalPanel = () => (
  <Terminal>
    <Grip>
      <CloseButton aria-label="关闭">
        <Cross s={4} />
      </CloseButton>
    </Grip>
    <TerminalBody>
      <Orders>
        <colgroup>
          <col width="92" />
          <col width="127" />
          <col width="64" />
          <col width="49" />
          <col width="65" />
          <col />
          <col width="214" />
        </colgroup>
        <thead>
          <tr>
            <th>订单&nbsp;&nbsp; /</th>
            <th>时间</th>
            <th>类型</th>
            <th>手数</th>
            <th>交易品种</th>
            <th>获利</th>
            <th>注释</th>
          </tr>
        </thead>
        <tbody>
          <tr>
            <td colSpan={5}>
              <Balance>
                <Ico s={5}>
                  <circle cx="6" cy="6" r="5" stroke="#888" strokeWidth="2" />
                  <path d="M3 9l6-6" stroke="#888" strokeWidth="2" />
                </Ico>
                {"余额: 50 468.60 USD  净值: 50 468.60  可用预付款: 50 468.60"}
              </Balance>
            </td>
            <AmountCell>0.00</AmountCell>
            <td />
          </tr>
        </tbody>
      </Orders>
      <Brand>
        <Watermark $x={426} $y={14} aria-hidden="true">.CN</Watermark>
        <Watermark $x={443} $y={86} aria-hidden="true">C.CN</Watermark>
        <Watermark $x={558} $y={90} aria-hidden="true">OGO神</Watermark>
        <svg width="43" height="45" viewBox="0 0 129 135" fill="#0a50ec" aria-hidden="true">
          <path d="M34 10q-3-8 5-8h58q6 0 8 6l22 62q3 10-6 11H66q-6 0-8-6z" />
          <path d="M24 22l26 66q2 5 8 5h61q-4 12-14 12H52q-8 0-11-8L18 38q-3-10 6-16z" />
          <path d="M9 46l25 66q2 5 8 5h60q-4 12-14 12H36q-8 0-11-8L3 62q-3-10 6-16z" />
        </svg>
        <BrandText>
          <BrandName>精品EA</BrandName>
          <BrandUrl href="#">eaclubshare.com</BrandUrl>
        </BrandText>
      </Brand>
    </TerminalBody>
  </Terminal>
);

const ExpertDialog = () => (
  <Dialog role="dialog" aria-label="Expert - ProfitLossTrailEA_v2.16">
    <DialogTitle>
      <DialogTitleText>Expert - ProfitLossTrailEA_v2.16</DialogTitleText>
      <TitleButton aria-label="帮助">?</TitleButton>
      <TitleButton aria-label="关闭">
        <Cross s={6} c="#333" w={1.5} />
      </TitleButton>
    </DialogTitle>
    <DialogTabs>
      <DialogTab>关于</DialogTab>
      <DialogTab>常用</DialogTab>
      <DialogTab $on>输入参数</DialogTab>
    </DialogTabs>
    <DialogPage>
      <ParamFrame>
        <ParamTable>
          <colgroup>
            <col width="145" />
            <col width="145" />
          </colgroup>
          <thead>
            <tr>
              <th>变量</th>
              <th>赋值</th>
            </tr>
          </thead>
          <tbody>
            {params.map(([k, name, value], i) => (
              <ParamRow key={name} $alt={i % 2 === 1}>
                <td>
                  <ParamName>
                    <ParamIcon k={k} />
                    {name}
                  </ParamName>
                </td>
                <td>{value}</td>
              </ParamRow>
            ))}
          </tbody>
        </ParamTable>
        <ScrollTrack $top={10}>
          <Thumb $h={274} />
        </ScrollTrack>
      </ParamFrame>
      <SideButtons>
        <PushButton $w={68}>加载(<u>L</u>)</PushButton>
        <PushButton $w={68}>保存(<u>S</u>)</PushButton>
      </SideButtons>
    </DialogPage>
    <DialogActions>
      <PushButton $w={49} $main>确定</PushButton>
      <PushButton $w={48}>取消</PushButton>
      <PushButton $w={48}>重设</PushButton>
    </DialogActions>
  </Dialog>
);

export default function App() {
  return (
    <App_>
      <Global />
      <MenuBar>
        <Icon n="logo" s={10} />
        <MenuList>
          {menus.map((m) => (
            <MenuItem key={m}>{m}</MenuItem>
          ))}
        </MenuList>
        <WindowButtons>
          <WindowButton aria-label="最小化">
            <Ico s={6}>
              <path d="M2 10h8" stroke="#7d93a8" strokeWidth="3" />
            </Ico>
          </WindowButton>
          <WindowButton aria-label="还原">
            <Ico s={6}>
              <path d="M4 4V1h7v6H8M1 5h7v6H1z" stroke="#7d93a8" strokeWidth="2" />
            </Ico>
          </WindowButton>
          <WindowButton aria-label="关闭">
            <Cross s={5} c="#7d93a8" />
          </WindowButton>
        </WindowButtons>
      </MenuBar>
      <Toolbars />
      <Workspace>
        <Side>
          <MarketWatch />
          <Navigator />
        </Side>
        <Chart />
      </Workspace>
      <TerminalPanel />
      <ExpertDialog />
    </App_>
  );
}
